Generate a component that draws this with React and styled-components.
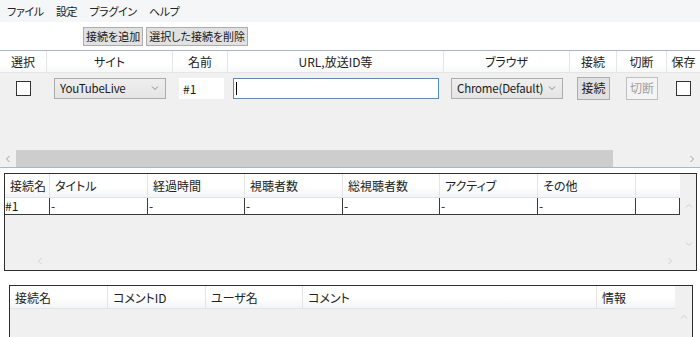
import React from "react";
import styled, { createGlobalStyle } from "styled-components";

const GlobalStyle = createGlobalStyle`
  html, body {
    margin: 0;
    padding: 0;
    background: #ffffff;
  }
  body {
    width: 700px;
    height: 337px;
    overflow: hidden;
    font-family: "Noto Sans CJK JP", "Noto Sans", sans-serif;
    font-size: 12px;
    color: #1a1a1a;
    font-feature-settings: "palt";
  }
`;

const Window = styled.div`
  width: 700px;
  height: 337px;
  display: flex;
  flex-direction: column;
  background: #ffffff;
  overflow: hidden;
  & > * {
    flex-shrink: 0;
  }
`;

const MenuBar = styled.div`
  height: 22px;
  display: flex;
  align-items: center;
  background: #f5f6f7;
  padding-left: 1px;
`;

const MenuItem = styled.span`
  padding: 0 6px;
  font-size: 11px;
  line-height: 22px;
  color: #222222;
  letter-spacing: -0.3px;
`;

const Toolbar = styled.div`
  height: 28px;
  display: flex;
  align-items: center;
  gap: 3px;
  padding-left: 83px;
  border-bottom: 1px solid #a9b6c4;
`;

const Button = styled.button`
  font-family: inherit;
  font-feature-settings: "palt";
  font-size: ${(p) => p.fontSize || "11px"};
  height: ${(p) => p.height || "19px"};
  padding: 0 ${(p) => p.padX || "2px"};
  margin: 0;
  line-height: 1;
  background: ${(p) => (p.disabled ? "#f4f4f4" : "#e1e1e1")};
  border: 1px solid ${(p) => (p.disabled ? "#bfbfbf" : "#adadad")};
  color: ${(p) => (p.disabled ? "#a0a0a0" : "#1a1a1a")};
  border-radius: 0;
`;

const ConnArea = styled.div`
  height: 116px;
  background: #f0f0f0;
  display: flex;
  flex-direction: column;
  border-bottom: 1px solid #a9b6c4;
`;

const ConnCols = "47px 126px 55px 216px 126px 47px 50px 33px";

const ConnHeader = styled.div`
  display: grid;
  grid-template-columns: ${ConnCols};
  height: 21px;
  background: linear-gradient(#ffffff, #ffffff 60%, #f7f8f9);
  border-bottom: 1px solid #e3e5e8;
`;

const HeadCell = styled.div`
  display: flex;
  align-items: center;
  justify-content: ${(p) => (p.left ? "flex-start" : "center")};
  padding-left: ${(p) => (p.left ? "5px" : "0")};
  border-right: 1px solid #e5e5e5;
  font-size: 12px;
  color: #222222;
  white-space: nowrap;
  overflow: hidden;
  &:last-child {
    border-right: none;
  }
`;

const ConnRow = styled.div`
  display: grid;
  grid-template-columns: ${ConnCols};
  height: 30px;
  align-items: center;
`;

const Cell = styled.div`
  display: flex;
  align-items: center;
  justify-content: ${(p) => p.justify || "center"};
`;

const Check = styled.span`
  display: block;
  width: 13px;
  height: 13px;
  border: 1px solid #333333;
  background: #ffffff;
`;

const SelectBox = styled.div`
  width: ${(p) => p.width};
  height: 21px;
  box-sizing: border-box;
  border: 1px solid #acacac;
  background: linear-gradient(#eeeeee, #e5e5e5);
  display: flex;
  align-items: center;
  justify-content: space-between;
  padding: 0 6px 0 5px;
  font-size: 11.5px;
  letter-spacing: -0.2px;
`;

const NameInput = styled.div`
  width: 45px;
  height: 21px;
  background: #ffffff;
  margin-left: 2px;
  display: flex;
  align-items: center;
  padding-left: 4px;
  box-sizing: border-box;
  font-size: 12px;
`;

const UrlInput = styled.div`
  width: 206px;
  height: 21px;
  box-sizing: border-box;
  border: 1px solid #4f8fd0;
  background: #ffffff;
  display: flex;
  align-items: center;
  padding-left: 2px;
  margin-left: 5px;
`;

const Caret = styled.span`
  width: 1px;
  height: 13px;
  background: #000000;
`;

const Spacer = styled.div`
  flex: 1;
`;

const HScroll = styled.div`
  height: 17px;
  display: flex;
  align-items: center;
  background: #f0f0f0;
`;

const ScrollArrow = styled.div`
  width: 16px;
  height: 17px;
  display: flex;
  align-items: center;
  justify-content: center;
`;

const Thumb = styled.div`
  width: ${(p) => p.width};
  height: 17px;
  background: #cdcdcd;
`;

const Panel = styled.div`
  margin: ${(p) => p.margin};
  width: ${(p) => p.width};
  height: ${(p) => p.height};
  box-sizing: border-box;
  border: 1px solid #2e2e2e;
  background: #f0f0f0;
  display: grid;
  grid-template-columns: 1fr 17px;
  overflow: hidden;
`;

const PanelMain = styled.div`
  display: flex;
  flex-direction: column;
  position: relative;
`;

const GridHeader = styled.div`
  display: grid;
  grid-template-columns: ${(p) => p.cols};
  height: ${(p) => p.h};
  background: linear-gradient(#ffffff, #ffffff 55%, #f3f4f6);
  border-bottom: 1px solid #e2e4e7;
`;

const DataRow = styled.div`
  display: grid;
  grid-template-columns: ${(p) => p.cols};
  height: 16px;
  background: #ffffff;
  border-bottom: 1px solid #3a3a3a;
`;

const DataCell = styled.div`
  border-right: 1px solid #3a3a3a;
  font-size: 12px;
  line-height: 15px;
  padding-left: ${(p) => (p.first ? "0" : "1px")};
  overflow: hidden;
  white-space: nowrap;
`;

const VScroll = styled.div`
  background: #f0f0f0;
  display: flex;
  flex-direction: column;
  align-items: center;
  padding-top: ${(p) => p.top};
  gap: ${(p) => p.gap || "0"};
`;

const Corner = styled.div`
  position: absolute;
  bottom: 2px;
  ${(p) => (p.right ? "right: 6px;" : "left: 31px;")}
`;

const Chevron = ({ dir = "down", color = "#8a8a8a", size = 8 }) => {
  const paths = {
    down: "M1 2.5 L4 5.5 L7 2.5",
    up: "M1 5.5 L4 2.5 L7 5.5",
    left: "M5.5 1 L2.5 4 L5.5 7",
    right: "M2.5 1 L5.5 4 L2.5 7",
  };
  return (
    <svg width={size} height={size} viewBox="0 0 8 8">
      <path d={paths[dir]} fill="none" stroke={color} strokeWidth="1" />
    </svg>
  );
};

const panel2Cols = "45px 98px 97px 98px 97px 98px 98px 44px";
const panel3Cols = "98px 98px 97px 294px 78px";

export default function App() {
  return (
    <Window>
      <GlobalStyle />
      <MenuBar>
        <MenuItem>ファイル</MenuItem>
        <MenuItem>設定</MenuItem>
        <MenuItem>プラグイン</MenuItem>
        <MenuItem>ヘルプ</MenuItem>
      </MenuBar>
      <Toolbar>
        <Button>接続を追加</Button>
        <Button>選択した接続を削除</Button>
      </Toolbar>

      <ConnArea>
        <ConnHeader>
          {["選択", "サイト", "名前", "URL,放送ID等", "ブラウザ", "接続", "切断", "保存"].map((h) => (
            <HeadCell key={h}>{h}</HeadCell>
          ))}
        </ConnHeader>
        <ConnRow>
          <Cell>
            <Check />
          </Cell>
          <Cell>
            <SelectBox width="112px">
              <span>YouTubeLive</span>
              <Chevron />
            </SelectBox>
          </Cell>
          <Cell>
            <NameInput>#1</NameInput>
          </Cell>
          <Cell justify="flex-start">
            <UrlInput>
              <Caret />
            </UrlInput>
          </Cell>
          <Cell>
            <SelectBox width="112px">
              <span>Chrome(Default)</span>
              <Chevron />
            </SelectBox>
          </Cell>
          <Cell>
            <Button height="23px" padX="3px" fontSize="12px">接続</Button>
          </Cell>
          <Cell>
            <Button height="23px" padX="3px" fontSize="12px" disabled>切断</Button>
          </Cell>
          <Cell>
            <Check />
          </Cell>
        </ConnRow>
        <Spacer />
        <HScroll>
          <ScrollArrow>
            <Chevron dir="left" color="#a0a0a0" />
          </ScrollArrow>
          <Thumb width="597px" />
          <Spacer />
          <ScrollArrow>
            <Chevron dir="right" color="#a0a0a0" />
          </ScrollArrow>
        </HScroll>
      </ConnArea>

      <Panel margin="5px 0 0 4px" width="693px" height="98px">
        <PanelMain>
          <GridHeader cols={panel2Cols} h="23px">
            {["接続名", "タイトル", "経過時間", "視聴者数", "総視聴者数", "アクティブ", "その他", ""].map((h, i) => (
              <HeadCell key={i} left>{h}</HeadCell>
            ))}
          </GridHeader>
          <DataRow cols={panel2Cols}>
            <DataCell first>#1</DataCell>
            <DataCell>-</DataCell>
            <DataCell>-</DataCell>
            <DataCell>-</DataCell>
            <DataCell>-</DataCell>
            <DataCell>-</DataCell>
            <DataCell>-</DataCell>
            <DataCell />
          </DataRow>
          <Corner>
            <Chevron dir="left" color="#d0d0d0" />
          </Corner>
          <Corner right>
            <Chevron dir="right" color="#d0d0d0" />
          </Corner>
        </PanelMain>
        <VScroll top="28px" gap="30px">
          <Chevron dir="up" color="#d0d0d0" />
          <Chevron dir="down" color="#d0d0d0" />
        </VScroll>
      </Panel>

      <Panel margin="14px 0 0 9px" width="684px" height="70px">
        <PanelMain>
          <GridHeader cols={panel3Cols} h="22px">
            {["接続名", "コメントID", "ユーザ名", "コメント", "情報"].map((h) => (
              <HeadCell key={h} left>{h}</HeadCell>
            ))}
          </GridHeader>
        </PanelMain>
        <VScroll top="27px">
          <Chevron dir="up" color="#d0d0d0" />
        </VScroll>
      </Panel>
    </Window>
  );
}
